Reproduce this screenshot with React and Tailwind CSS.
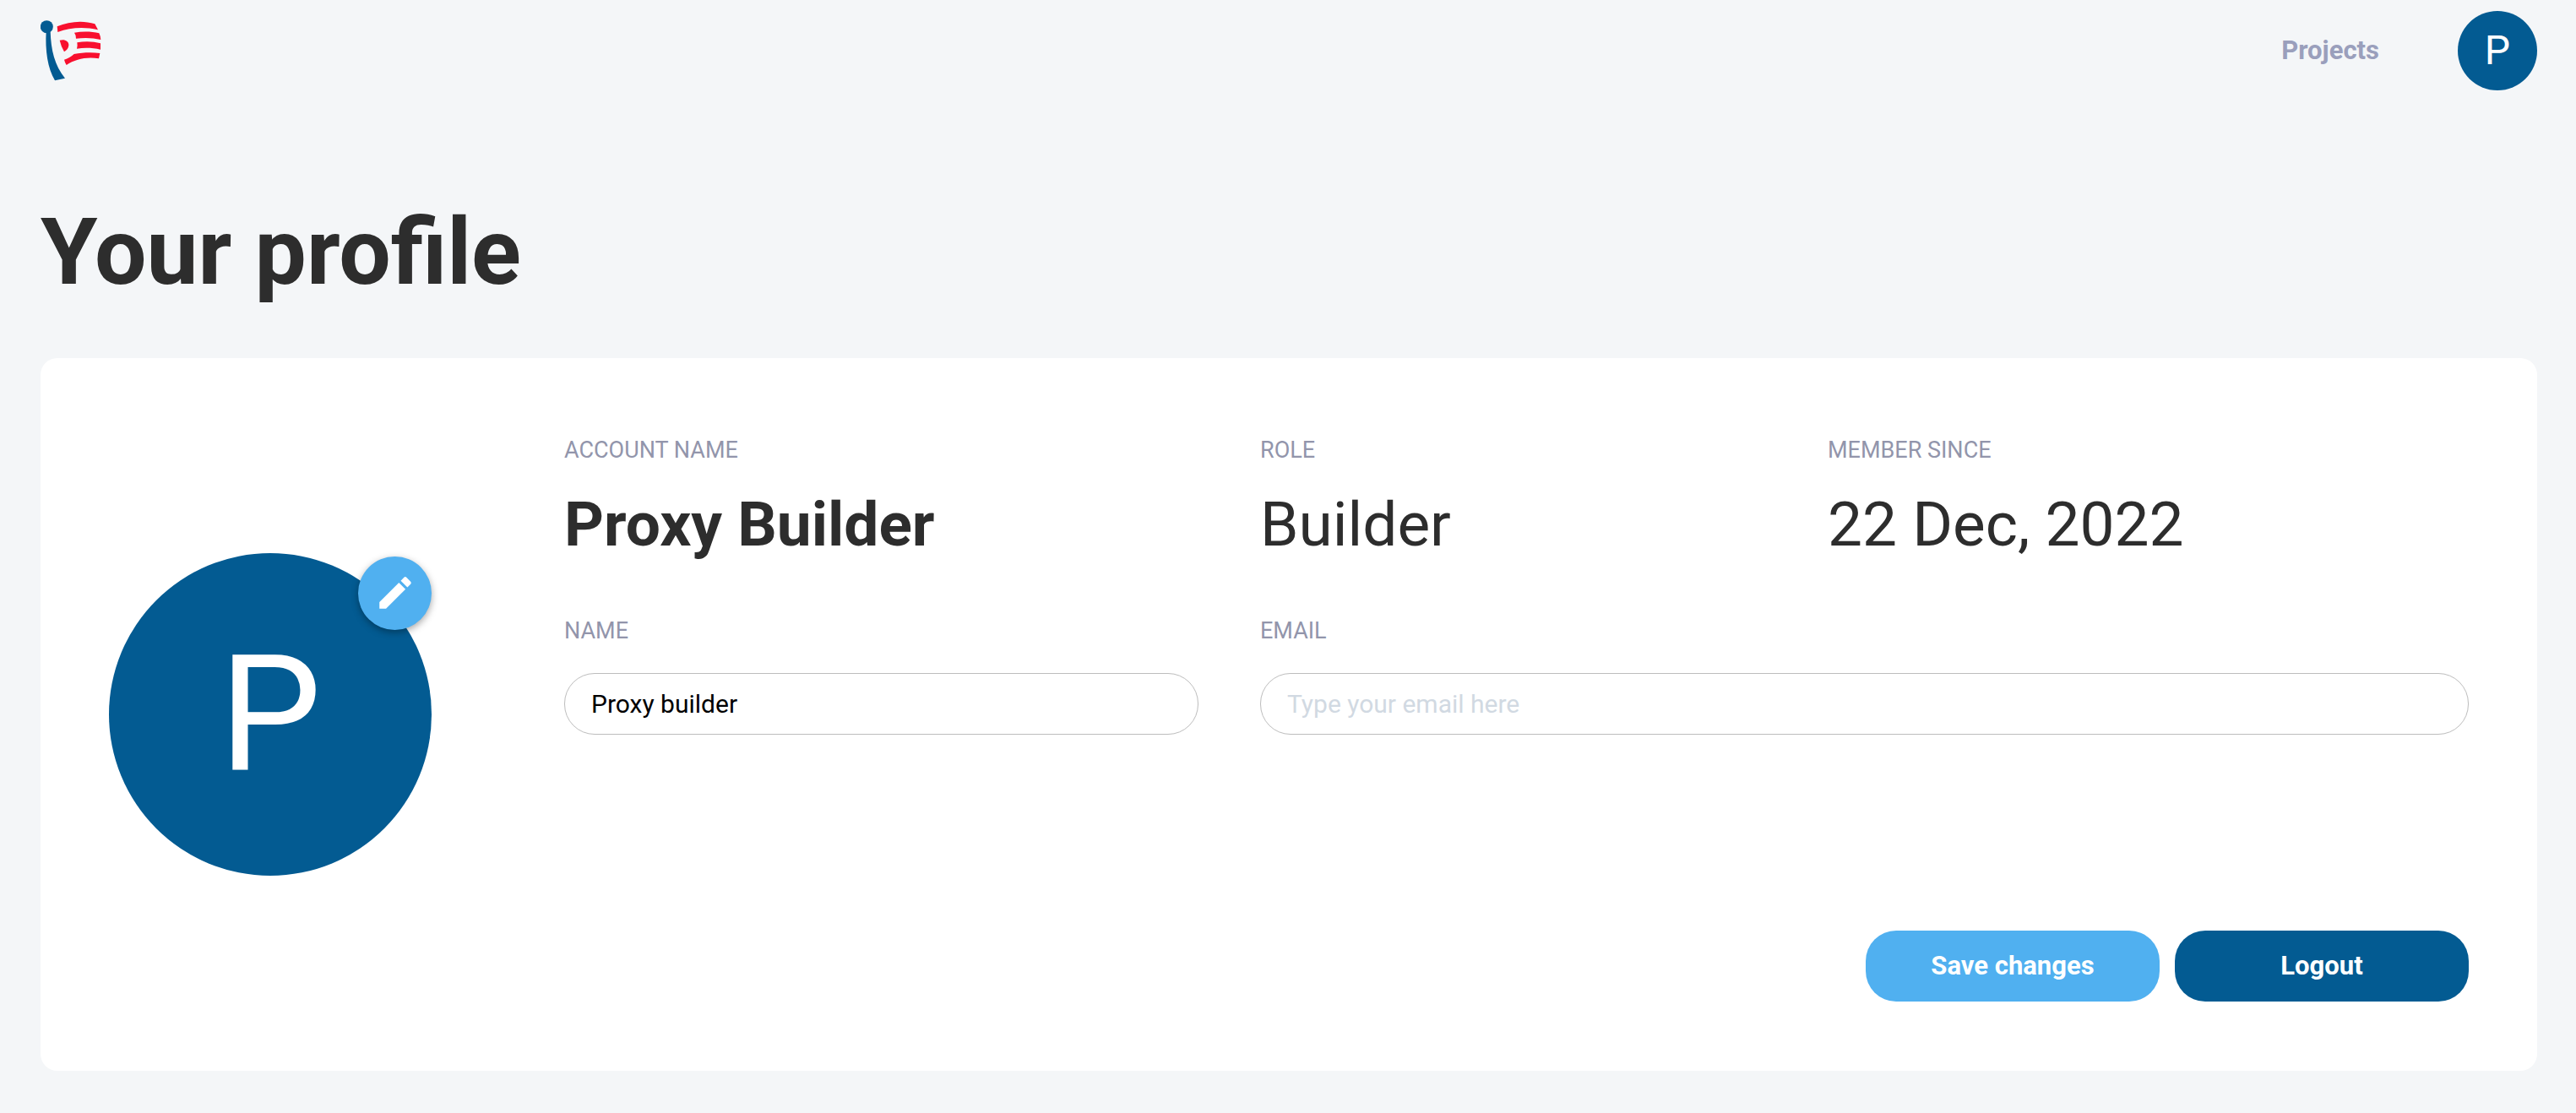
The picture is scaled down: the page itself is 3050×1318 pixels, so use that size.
import { MdEdit } from "react-icons/md";

function Logo() {
  return (
    <svg viewBox="54 44 216 216" className="size-[72px]" aria-hidden="true">
      <circle cx="76" cy="67" r="22.5" fill="#035b92" />
      <path d="M74 84 L89 84 C91 150 104 205 141 250 L105 258 C79 215 70 150 74 84 Z" fill="#035b92" />
      <g fill="#f8102f">
        <path d="M113 66 C155 48 205 43 247 57 L258 78 C205 66 158 71 115 86 Z" />
        <path d="M174 88 C204 83 237 84 262 90 Q267 100 268 113 C240 106 210 105 180 109 Q181 98 174 88 Z" />
        <path d="M184 123 C212 118 242 119 267 126 L267 148 C240 142 210 141 183 145 Q186 134 184 123 Z" />
        <path d="M122 115 C139 110 154 117 154 132 C154 143 147 151 138 156 Q127 137 122 115 Z" />
        <path d="M138 184 C152 180 162 174 173 164 C203 158 237 157 265 161 L261 180 C217 173 178 182 146 203 Q141 196 138 184 Z" />
      </g>
    </svg>
  );
}

function Stat({ label, value, bold }) {
  return (
    <div>
      <dt className="text-[27px] leading-[56px] text-[#9295ab] uppercase">{label}</dt>
      <dd
        className={
          bold
            ? "mt-1.5 text-[73px] leading-[108px] font-bold whitespace-nowrap"
            : "mt-1.5 text-[73px] leading-[108px] whitespace-nowrap"
        }
      >
        {value}
      </dd>
    </div>
  );
}

function Field({ id, label, className, ...inputProps }) {
  return (
    <div className={className}>
      <label htmlFor={id} className="block text-[27px] leading-[56px] text-[#9295ab] uppercase">
        {label}
      </label>
      <input
        id={id}
        className="mt-[22px] block h-[73px] w-full rounded-[36px] border border-[#bdbdbd] bg-white px-[31px] text-[30px] text-black placeholder:text-[#d1d9e2]"
        {...inputProps}
      />
    </div>
  );
}

export default function App() {
  return (
    <div className="min-h-screen bg-[#f4f6f8] pr-[46px] pb-12 pl-12 font-[Roboto,sans-serif] text-[#2d2d2d]">
      <header className="flex h-[120px] items-center justify-between">
        <a href="#home" aria-label="Home">
          <Logo />
        </a>
        <nav className="flex items-center gap-[93px]">
          <a href="#projects" className="text-[31px] font-bold text-[#9a9fbc]">
            Projects
          </a>
          <button
            type="button"
            aria-label="Account"
            className="flex size-[94px] items-center justify-center rounded-full bg-[#035b92] text-5xl text-white"
          >
            P
          </button>
        </nav>
      </header>

      <main>
        <h1 className="mt-[114px] text-[109px] leading-[130px] font-bold">Your profile</h1>

        <section className="mt-[60px] flex items-center gap-[157px] rounded-[20px] bg-white px-[81px] pt-[81px] pb-[82px]">
          <div className="relative flex size-[382px] shrink-0 items-center justify-center rounded-full bg-[#035b92] text-[192px] text-white">
            P
            <button
              type="button"
              aria-label="Edit picture"
              className="absolute top-1 right-0 flex size-[87px] items-center justify-center rounded-full bg-[#50b0f0] shadow-[0_3px_8px_rgba(0,0,0,0.35)]"
            >
              <MdEdit className="size-[50px]" />
            </button>
          </div>

          <form className="min-w-0 flex-1" onSubmit={(event) => event.preventDefault()}>
            <dl className="grid grid-cols-[751fr_599fr_759fr] gap-x-[73px]">
              <Stat label="Account name" value="Proxy Builder" bold />
              <Stat label="Role" value="Builder" />
              <Stat label="Member since" value="22 Dec, 2022" />
            </dl>
            <div className="mt-11 grid grid-cols-[751fr_599fr_759fr] gap-x-[73px]">
              <Field id="name" label="Name" type="text" defaultValue="Proxy builder" />
              <Field
                id="email"
                label="Email"
                type="email"
                placeholder="Type your email here"
                className="col-span-2"
              />
            </div>
            <div className="mt-[232px] flex justify-end gap-[18px] text-[31px] font-bold text-white">
              <button type="submit" className="h-[84px] w-[348px] rounded-[36px] bg-[#50b0f0]">
                Save changes
              </button>
              <button type="button" className="h-[84px] w-[348px] rounded-[36px] bg-[#035b92]">
                Logout
              </button>
            </div>
          </form>
        </section>
      </main>
    </div>
  );
}
